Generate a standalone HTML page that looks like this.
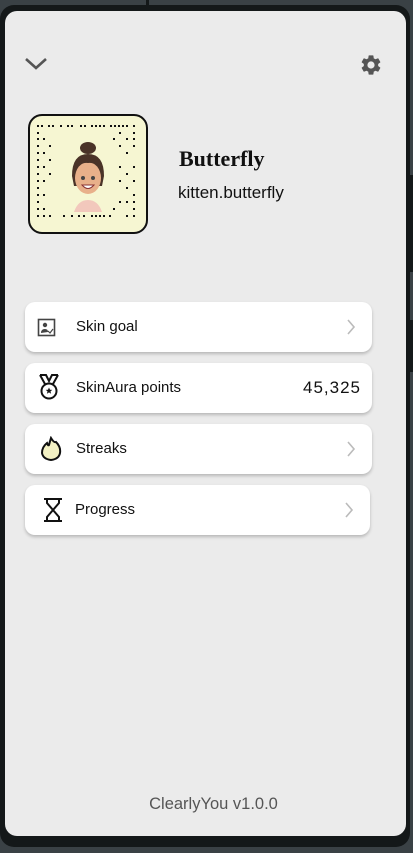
<!DOCTYPE html>
<html><head><style>
*{margin:0;padding:0;box-sizing:border-box}
body{width:413px;height:853px;background:#3a4145;position:relative;overflow:hidden;font-family:"Liberation Sans",sans-serif}
.bezel{position:absolute;left:0;top:5px;width:410px;height:842px;background:#141819;border-radius:14px}
.btn{position:absolute;right:0;width:5px;background:#141819}
.screen{position:absolute;left:5px;top:11px;width:401px;height:825px;background:#ebebeb;border-radius:12px}
.card{position:absolute;left:25px;width:347px;height:50px;background:#fff;border-radius:10px;box-shadow:0 2px 3px rgba(0,0,0,.22)}
.card span{position:absolute;left:51px;top:16px;font-size:15px;color:#111}
.chev{position:absolute;right:16px;top:17px}
.ic{position:absolute;left:12px;top:13px}
</style></head><body>
<div style="position:absolute;left:146px;top:0;width:3px;height:6px;background:#141819"></div>
<div class="bezel"></div>
<div class="btn" style="top:175px;height:97px"></div>
<div class="btn" style="top:320px;height:52px"></div>
<div class="screen"></div>
<svg style="position:absolute;left:24px;top:56px" width="24" height="16"><path d="M2 3 L12 12 L22 3" fill="none" stroke="#555" stroke-width="2.6"/></svg>
<svg style="position:absolute;left:359px;top:53px" width="24" height="24" viewBox="0 0 24 24"><path fill="#555" d="M19.14 12.94c.04-.3.06-.61.06-.94 0-.32-.02-.64-.07-.94l2.03-1.580a.49.49 0 0 0 .12-.61l-1.92-3.32a.49.49 0 0 0-.59-.22l-2.39.96c-.5-.38-1.030-.7-1.62-.94l-.36-2.54a.48.48 0 0 0-.48-.41h-3.84a.48.48 0 0 0-.47.41l-.36 2.54c-.59.24-1.13.57-1.62.94l-2.39-.96a.48.48 0 0 0-.59.22L2.74 8.87c-.12.21-.08.47.12.61l2.03 1.58c-.05.3-.09.63-.09.94s.02.64.07.94l-2.030 1.58a.49.49 0 0 0-.12.61l1.92 3.32c.12.22.37.29.59.22l2.39-.96c.5.38 1.03.7 1.62.94l.36 2.54c.05.24.24.41.48.41h3.84c.24 0 .44-.17.47-.41l.36-2.54c.59-.24 1.13-.56 1.62-.94l2.39.96c.22.08.47 0 .59-.22l1.92-3.32c.12-.22.07-.47-.12-.61l-2.01-1.58zM12 15.6A3.6 3.6 0 1 1 12 8.4a3.6 3.6 0 0 1 0 7.2z"/></svg>
<div style="position:absolute;left:28px;top:114px;width:120px;height:120px;background:#f6f6d2;border:2px solid #111;border-radius:14px;overflow:hidden">
<svg width="116" height="116" style="position:absolute;left:0;top:0">
<g fill="#111">
<path d="M7 9h2v2H7zM11 9h2v2h-2zM18 9h2v2h-2zM22 9h2v2h-2zM30 9h2v2h-2zM37 9h2v2h-2zM41 9h2v2h-2zM50 9h2v2h-2zM54 9h2v2h-2zM61 9h2v2h-2zM65 9h2v2h-2zM69 9h2v2h-2zM73 9h2v2h-2zM80 9h2v2h-2zM84 9h2v2h-2zM88 9h2v2h-2zM92 9h2v2h-2zM96 9h2v2h-2zM103 9h2v2h-2z"/>
<path d="M7 16h2v2H7zM7 22h2v2H7zM7 29h2v2H7zM7 36h2v2H7zM7 43h2v2H7zM7 50h2v2H7zM7 57h2v2H7zM7 64h2v2H7zM7 71h2v2H7zM7 78h2v2H7zM7 85h2v2H7zM7 92h2v2H7zM7 99h2v2H7zM13 22h2v2h-2zM13 36h2v2h-2zM13 50h2v2h-2zM13 64h2v2h-2zM13 78h2v2h-2zM13 92h2v2h-2zM13 99h2v2h-2zM19 29h2v2h-2zM19 43h2v2h-2zM19 57h2v2h-2zM19 99h2v2h-2z"/>
<path d="M103 16h2v2h-2zM103 22h2v2h-2zM103 29h2v2h-2zM103 50h2v2h-2zM103 64h2v2h-2zM103 78h2v2h-2zM103 85h2v2h-2zM103 92h2v2h-2zM103 99h2v2h-2zM96 22h2v2h-2zM96 36h2v2h-2zM96 57h2v2h-2zM96 71h2v2h-2zM96 85h2v2h-2zM96 99h2v2h-2zM89 16h2v2h-2zM89 29h2v2h-2zM89 50h2v2h-2zM89 64h2v2h-2zM89 85h2v2h-2zM83 22h2v2h-2zM83 92h2v2h-2z"/>
<path d="M33 99h2v2h-2zM41 99h2v2h-2zM48 99h2v2h-2zM53 99h2v2h-2zM61 99h2v2h-2zM65 99h2v2h-2zM69 99h2v2h-2zM73 99h2v2h-2zM79 99h2v2h-2z"/>
</g>
<ellipse cx="58" cy="32" rx="8" ry="6" fill="#4a3328"/>
<path d="M42 60 Q42 38 58 38 Q74 38 74 60 L72 70 L44 70Z" fill="#4a3328"/>
<ellipse cx="58" cy="62" rx="13" ry="16" fill="#e8b08a"/>
<path d="M45 55 Q50 42 58 44 Q68 42 71 55 Q66 46 58 47 Q50 46 45 55Z" fill="#4a3328"/>
<circle cx="53" cy="62" r="2" fill="#444"/><circle cx="63" cy="62" r="2" fill="#444"/>
<path d="M52 69 Q58 76 64 69Z" fill="#fff" stroke="#833" stroke-width="1"/>
<path d="M44 96 Q48 84 58 84 Q68 84 72 96Z" fill="#f2c8bc"/>
</svg></div>
<div style="position:absolute;left:179px;top:146px;font-family:'Liberation Serif',serif;font-weight:bold;font-size:22px;color:#111">Butterfly</div>
<div style="position:absolute;left:178px;top:183px;font-size:17px;color:#111">kitten.butterfly</div>

<div class="card" style="top:302px">
<svg class="ic" width="22" height="22" viewBox="0 0 22 22" style="left:12px;top:16px"><rect x="1.5" y="1.5" width="16" height="16" fill="none" stroke="#444" stroke-width="1.6"/><circle cx="8" cy="7" r="2.2" fill="#444"/><path d="M4 15 Q4 11 8 11 Q11 11 11 14Z" fill="#444"/><path d="M11 13 l2 2 l3 -4" fill="none" stroke="#444" stroke-width="1.2"/></svg>
<span>Skin goal</span>
<svg class="chev" width="10" height="16"><path d="M2 1 L8 8 L2 15" fill="none" stroke="#bbb" stroke-width="1.6"/></svg></div>

<div class="card" style="top:363px">
<svg class="ic" width="24" height="28" viewBox="0 0 24 28" style="left:12px;top:10px"><path d="M3 2 L8 11 M21 2 L16 11 M3 2 H9 L12 8 L15 2 H21" fill="none" stroke="#111" stroke-width="2"/><circle cx="12" cy="18" r="7.5" fill="none" stroke="#111" stroke-width="2"/><path d="M12 14.5 l1 2.2 2.3.2-1.8 1.5.6 2.3-2.1-1.3-2.1 1.3.6-2.3-1.8-1.5 2.3-.2z" fill="#111"/></svg>
<span>SkinAura points</span>
<div style="position:absolute;right:11px;top:15px;font-size:17px;letter-spacing:1px;color:#111">45,325</div></div>

<div class="card" style="top:424px">
<svg class="ic" width="24" height="26" viewBox="0 0 24 26" style="left:14px;top:12px"><path d="M12 2 Q15 7 17 6 Q22 11 21 17 Q20 23 12 24 Q4 23 3 17 Q3 11 8 7 Q9 10 10 9 Q11 5 12 2Z" fill="#f3f1c4" stroke="#111" stroke-width="2"/></svg>
<span>Streaks</span>
<svg class="chev" width="10" height="16"><path d="M2 1 L8 8 L2 15" fill="none" stroke="#bbb" stroke-width="1.6"/></svg></div>

<div class="card" style="top:485px;width:345px">
<svg class="ic" width="22" height="26" viewBox="0 0 22 26" style="left:17px;top:12px"><path d="M2 2 H20 M2 24 H20 M5 2 V6 L11 13 L5 20 V24 M17 2 V6 L11 13 L17 20 V24" fill="none" stroke="#111" stroke-width="2"/></svg>
<span style="left:50px">Progress</span>
<svg class="chev" width="10" height="16"><path d="M2 1 L8 8 L2 15" fill="none" stroke="#bbb" stroke-width="1.6"/></svg></div>

<div style="position:absolute;left:0;width:413px;top:795px;text-align:center;font-size:16.5px;color:#555;padding-left:14px">ClearlyYou v1.0.0</div>
</body></html>
